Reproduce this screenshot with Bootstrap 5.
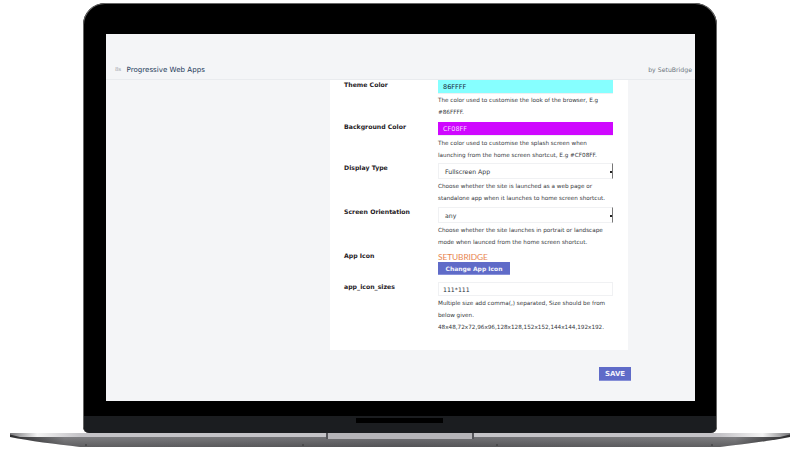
<!DOCTYPE html>
<html lang="en">
<head>
<meta charset="utf-8">
<title>Progressive Web Apps</title>
<link href="https://cdn.jsdelivr.net/npm/bootstrap@5.3.0/dist/css/bootstrap.min.css" rel="stylesheet">
<style>
html,body{margin:0;height:450px;overflow:hidden;background:#fff;font-family:"DejaVu Sans",sans-serif}
.stage{width:800px;height:450px;overflow:hidden}
.lid{width:634px;height:430px;margin:3px 0 0 83px;padding:31px 23px 0;background:#000;border-radius:22px 22px 6px 6px;box-shadow:inset 0 0 0 1px #666;position:relative;overflow:hidden}
.hinge{position:absolute;left:1px;right:1px;bottom:0;height:17px;background:#1b1d20;border-radius:0 0 5px 5px}
.hinge-slot{position:absolute;left:272px;width:87px;top:2px;height:5px;background:#000}
.screen{width:589px;height:367px;background:#f4f5f7;display:flex;flex-direction:column}
.topbar{height:46px;flex:none;border-bottom:1px solid #e9ebee;padding:0 3px 5px 9px;line-height:9px}
.topbar-icon{width:12px;color:#a3a8ae;font-size:5.500px;letter-spacing:-.3px}
.topbar-title{color:#1d3a5a;font-size:7.100px;margin-left:-.5px}
.topbar-by{color:#6d7680;font-size:6.200px}
.panel-wrap{flex:1;padding-left:224px;min-height:0}
.panel{width:298px;height:270px;background:#fff;padding:0 15px 0 14px;overflow:hidden}
.field-label{width:94px;flex:none;font-size:6.200px;font-weight:700;color:#1f2226;line-height:9px}
.field-value{width:175px;flex:none}
.field{display:flex}
.gap-a{margin-top:4px}
.gap-b{margin-top:2px}
.gap-c{margin-top:3px}
.gap-d{margin-top:3px}
.gap-e{margin-top:7px}
.swatch{height:14px;font-size:6.500px;line-height:14px;padding-left:5px;border-bottom:1px solid #eef0f2}
.swatch-theme{background:#86ffff;color:#16283a}
.swatch-bg{background:#cf08ff;color:#f6d8ff}
.hint{font-size:5.680px;line-height:12px;color:#33363a;margin:0;white-space:nowrap}
.hint-first{margin-top:1px}
.select-box{height:16px;border:1px solid #f0f1f3;border-right:1px solid #777;font-size:6.200px;line-height:15px;padding-left:6px;color:#33383e;position:relative}
.select-box::after{content:"";position:absolute;right:0;top:7px;width:2px;height:2px;background:#222}
.text-box{height:14px;border:1px solid #f0f1f3;font-size:6.200px;line-height:13px;padding-left:4px;color:#28303a}
.brand-logo{font-family:"Lato",sans-serif;font-size:8.400px;line-height:10px;color:#e8854f;height:10px;letter-spacing:-.1px;margin-top:1px}
.action-btn{background:#5f6bc8;color:#f2f3fb;border:0;border-radius:0;font-weight:700;padding:0;line-height:14px;display:block;box-shadow:inset 0 -1px 0 #8790d8}
.change-btn{width:72px;height:13px;line-height:13px;font-size:6px;margin-top:0}
.save-row{width:301px;margin-top:17px}
.save-btn{width:32px;height:14px;font-size:7px}
.base-svg{display:block}
</style>
</head>
<body>
<div class="stage">
  <div class="lid">
    <div class="screen">
      <div class="topbar d-flex align-items-end justify-content-between">
        <div class="d-flex align-items-center"><span class="topbar-icon">8s</span><span class="topbar-title">Progressive Web Apps</span></div>
        <span class="topbar-by">by SetuBridge</span>
      </div>
      <div class="panel-wrap">
        <div class="panel">
          <div class="field"><div class="field-label">Theme Color</div>
            <div class="field-value"><div class="swatch swatch-theme">86FFFF</div><p class="hint">The color used to customise the look of the browser, E.g</p><p class="hint">#86FFFF.</p></div></div>
          <div class="field gap-a"><div class="field-label">Background Color</div>
            <div class="field-value"><div class="swatch swatch-bg">CF08FF</div><p class="hint hint-first">The color used to customise the splash screen when</p><p class="hint">launching from the home screen shortcut, E.g #CF08FF.</p></div></div>
          <div class="field gap-b"><div class="field-label">Display Type</div>
            <div class="field-value"><div class="select-box">Fullscreen App</div><p class="hint hint-first">Choose whether the site is launched as a web page or</p><p class="hint">standalone app when it launches to home screen shortcut.</p></div></div>
          <div class="field gap-c"><div class="field-label">Screen Orientation</div>
            <div class="field-value"><div class="select-box">any</div><p class="hint hint-first">Choose whether the site launches in portrait or landscape</p><p class="hint">mode when launced from the home screen shortcut.</p></div></div>
          <div class="field gap-d"><div class="field-label">App Icon</div>
            <div class="field-value"><div class="brand-logo">SETUBRIDGE</div><button type="button" class="btn action-btn change-btn">Change App Icon</button></div></div>
          <div class="field gap-e"><div class="field-label">app_icon_sizes</div>
            <div class="field-value"><div class="text-box">111*111</div><p class="hint hint-first">Multiple size add comma(,) separated, Size should be from</p><p class="hint">below given.</p><p class="hint">48x48,72x72,96x96,128x128,152x152,144x144,192x192.</p></div></div>
        </div>
        <div class="save-row d-flex justify-content-end"><button type="button" class="btn action-btn save-btn">SAVE</button></div>
      </div>
    </div>
    <div class="hinge"><div class="hinge-slot"></div></div>
  </div>
  <svg class="base-svg" width="800" height="17" viewBox="0 0 800 17" aria-hidden="true">
    <defs>
      <linearGradient id="tipg" x1="0" x2="1" y1="0" y2="0">
        <stop offset="0" stop-color="#77777a"/><stop offset=".035" stop-color="#f4f4f4"/><stop offset=".09" stop-color="#c4c3c7"/><stop offset=".91" stop-color="#c4c3c7"/><stop offset=".965" stop-color="#f4f4f4"/><stop offset="1" stop-color="#77777a"/>
      </linearGradient>
      <linearGradient id="bodyg" x1="0" x2="1" y1="0" y2="0">
        <stop offset="0" stop-color="#2e2e30"/><stop offset=".07" stop-color="#88888b"/><stop offset=".5" stop-color="#77777b"/><stop offset=".93" stop-color="#88888b"/><stop offset="1" stop-color="#2e2e30"/>
      </linearGradient>
      <linearGradient id="shadeg" x1="0" x2="0" y1="0" y2="1">
        <stop offset="0" stop-color="#000" stop-opacity="0"/><stop offset="1" stop-color="#000" stop-opacity=".3"/>
      </linearGradient>
    </defs>
    <path d="M10 1H790V4C770 8 745 11 720 14H80C55 11 30 8 10 4Z" fill="url(#bodyg)"/>
    <path d="M10 1H790V4C770 8 745 11 720 14H80C55 11 30 8 10 4Z" fill="url(#shadeg)"/>
    <path d="M10 0H790V1.500L780 4H20L10 1.500Z" fill="url(#tipg)"/>
    <rect x="327" y="0" width="146" height="6" fill="#b5b4b8"/>
    <rect x="326" y="0" width="2" height="6" fill="#55555a"/><rect x="472" y="0" width="2" height="6" fill="#55555a"/>
    <circle cx="86" cy="12" r=".8" fill="#333"/><circle cx="303" cy="12" r=".8" fill="#333"/><circle cx="497" cy="12" r=".8" fill="#333"/><circle cx="712" cy="12" r=".8" fill="#333"/>
  </svg>
</div>
</body>
</html>
